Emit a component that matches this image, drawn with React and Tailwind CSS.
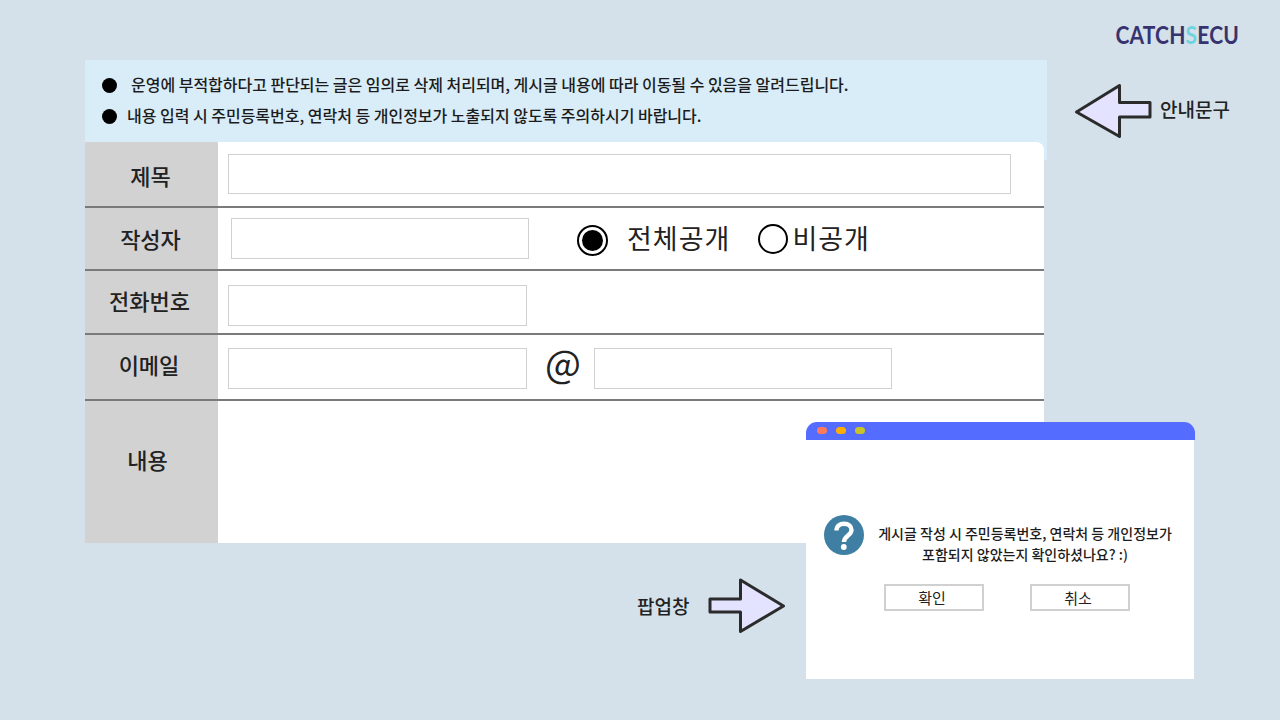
const font = { fontFamily: '"Noto Sans CJK KR", "Noto Sans", sans-serif' };

function Row({ label, h, labelClass, children, line = true }) {
  return (
    <div className={`flex ${h} ${line ? "border-b-2 border-[#7a7a7a]" : ""}`}>
      <div className="w-[133px] shrink-0 bg-[#d2d2d2] flex items-center justify-center text-[22px] leading-none font-medium text-[#222]">
        <span className={labelClass}>{label}</span>
      </div>
      <div className="flex-1 flex items-center min-w-0">{children}</div>
    </div>
  );
}

function Field({ className }) {
  return <div className={`border border-[#d0d0d0] bg-white shrink-0 ${className}`} />;
}

function Notice({ text, gap, className }) {
  return (
    <div className={`flex items-center ${className}`}>
      <span className={`w-[15px] h-[15px] rounded-full bg-black shrink-0 ${gap}`} />
      <span className="text-[16px] leading-none font-medium text-[#1c1c1c] whitespace-nowrap -mt-[2px] tracking-[-0.02px]">{text}</span>
    </div>
  );
}

function LeftArrow() {
  return (
    <svg className="absolute left-[1070px] top-[80px]" width="86" height="62" viewBox="0 0 86 62" fill="none">
      <path d="M6.5 32 L49.5 5.5 L49.5 22.5 L80 22.5 L80 37 L49.5 37 L49.5 56.5 Z" fill="#e3e3ff" stroke="#2b2b2b" strokeWidth="3" strokeLinejoin="round" />
    </svg>
  );
}

function RightArrow() {
  return (
    <svg className="absolute left-[704px] top-[574px]" width="86" height="64" viewBox="0 0 86 64" fill="none">
      <path d="M79.5 32 L36.5 6 L36.5 25 L6 25 L6 38 L36.5 38 L36.5 57.5 Z" fill="#e3e3ff" stroke="#2b2b2b" strokeWidth="3" strokeLinejoin="round" />
    </svg>
  );
}

function QuestionIcon() {
  return (
    <svg className="shrink-0" width="40" height="40" viewBox="0 0 40 40" fill="none">
      <circle cx="20" cy="20" r="20" fill="#3f7fa3" />
      <path d="M12.5 15.5 C12.5 10.8 15.8 8.8 20 8.8 C24.5 8.8 27.5 11.3 27.5 15 C27.5 20.5 20 20.5 20 27" stroke="#fff" strokeWidth="4.4" />
      <circle cx="19.8" cy="32" r="2.9" fill="#fff" />
    </svg>
  );
}

function Popup() {
  return (
    <div className="absolute left-[806px] top-[422px] w-[389px] h-[257px] flex flex-col">
      <div className="h-[18px] bg-[#546cff] rounded-t-[11px] flex items-center gap-[9px] pl-[11px] shrink-0">
        <span className="w-[10px] h-[7px] rounded-full bg-[#ff7a5c] -mt-[1px]" />
        <span className="w-[10px] h-[7px] rounded-full bg-[#ffae00] -mt-[1px]" />
        <span className="w-[10px] h-[7px] rounded-full bg-[#c8c428] -mt-[1px]" />
      </div>
      <div className="flex-1 bg-white w-[388px] pt-[75px] flex flex-col">
        <div className="flex items-start pl-[18px]">
          <QuestionIcon />
          <div className="ml-[14px] w-[294px] text-center text-[14px] leading-[21px] font-medium text-[#1c1c1c] mt-[8px] whitespace-nowrap">
            <div>게시글 작성 시 주민등록번호, 연락처 등 개인정보가</div>
            <div>포함되지 않았는지 확인하셨나요? :)</div>
          </div>
        </div>
        <div className="flex pl-[78px] gap-[46px] mt-[19px]">
          <div className="w-[100px] h-[27px] border-2 border-[#d0d0d0] flex items-center justify-center text-[15px] leading-none text-[#222] pr-[4px]">확인</div>
          <div className="w-[100px] h-[27px] border-2 border-[#d0d0d0] flex items-center justify-center text-[15px] leading-none text-[#222] pr-[4px]">취소</div>
        </div>
      </div>
    </div>
  );
}

export default function App() {
  return (
    <div className="relative w-[1280px] h-[720px] overflow-hidden bg-[#d4e1ea] flex flex-col" style={font}>
      <header className="h-[60px] shrink-0 flex justify-end items-start pr-[41px] pt-[18px]">
        <div className="text-[25px] leading-[32px] font-bold tracking-[0.2px] text-[#37336f] whitespace-nowrap origin-right scale-x-[0.84]" style={{ fontFamily: 'Lato, sans-serif' }}>
          CATCH<span className="text-[#6fd3e0]">S</span>ECU
        </div>
      </header>

      <main className="ml-[85px] w-[962px]">
        <section className="h-[100px] bg-[#d9edf9] pt-[17px]">
          <Notice text="운영에 부적합하다고 판단되는 글은 임의로 삭제 처리되며, 게시글 내용에 따라 이동될 수 있음을 알려드립니다." gap="mr-[14px]" className="ml-[17px] h-[16px]" />
          <Notice text="내용 입력 시 주민등록번호, 연락처 등 개인정보가 노출되지 않도록 주의하시기 바랍니다." gap="mr-[10px]" className="ml-[17px] h-[16px] mt-[15px]" />
        </section>

        <section className="w-[959px] -mt-[18px] bg-white rounded-tr-[8px] overflow-hidden relative">
          <Row label="제목" h="h-[66px]" labelClass="-ml-[2px] mt-[2px]">
            <Field className="ml-[10px] w-[783px] h-[40px]" />
          </Row>
          <Row label="작성자" h="h-[63px]" labelClass="-ml-[2px] -mt-[2px]">
            <Field className="ml-[13px] w-[298px] h-[41px]" />
            <div className="ml-[48px] w-[31px] h-[31px] rounded-full border-2 border-black flex items-center justify-center shrink-0 mt-[3px]">
              <span className="w-[21px] h-[21px] rounded-full bg-black" />
            </div>
            <span className="ml-[19px] text-[27px] leading-none text-[#222] -mt-[3px] tracking-[1px] whitespace-nowrap">전체공개</span>
            <span className="ml-[28px] w-[30px] h-[30px] rounded-full border-2 border-black shrink-0 mt-[1px]" />
            <span className="ml-[4px] text-[27px] leading-none text-[#222] -mt-[3px] tracking-[1px] whitespace-nowrap">비공개</span>
          </Row>
          <Row label="전화번호" h="h-[64px]" labelClass="-ml-[4px] -mt-[4px]">
            <Field className="ml-[10px] w-[299px] h-[41px] mt-[6px]" />
          </Row>
          <Row label="이메일" h="h-[66px]" labelClass="-ml-[5px] -mt-[6px]">
            <Field className="ml-[10px] w-[299px] h-[41px] mt-[2px]" />
            <span className="ml-[17px] w-[38px] text-center text-[38px] leading-none text-[#222] -mt-[11px]">@</span>
            <Field className="ml-[12px] w-[298px] h-[41px] mt-[2px]" />
          </Row>
          <div className="flex h-[142px]">
            <div className="w-[133px] bg-[#d2d2d2] flex justify-center pt-[45px] pr-[8px] text-[22px] leading-[26px] font-medium text-[#222]">내용</div>
          </div>
        </section>
      </main>

      <LeftArrow />
      <span className="absolute left-[1160px] top-[96px] text-[19px] leading-[26px] font-medium text-[#222] whitespace-nowrap">안내문구</span>
      <RightArrow />
      <span className="absolute left-[637px] top-[593px] text-[19px] leading-[26px] font-medium text-[#222] whitespace-nowrap">팝업창</span>
      <Popup />
    </div>
  );
}
